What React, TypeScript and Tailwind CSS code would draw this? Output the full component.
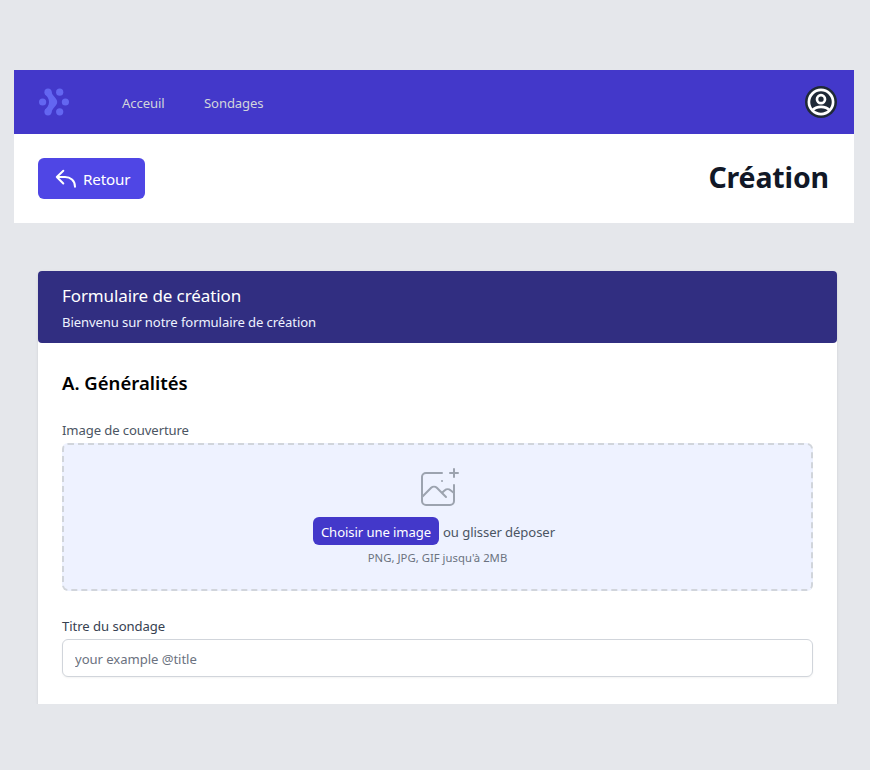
import React from "react";

function Logo() {
  return (
    <svg width="32" height="32" viewBox="0 0 32 32" fill="#6366f1" className="shrink-0">
      <circle cx="4.6" cy="16" r="3.6" />
      <circle cx="10" cy="6.2" r="3.6" />
      <circle cx="21.7" cy="6.2" r="3.6" />
      <circle cx="27.4" cy="16" r="3.6" />
      <circle cx="21.7" cy="25.8" r="3.6" />
      <circle cx="10" cy="25.8" r="3.6" />
      <path d="M13.4 5.2C13.7 9.4 19.2 12 19.2 16s-5.5 6.6-5.8 10.8L7 23.8c2.3-2.2 4-4.6 4-7.8S9.3 10.4 7 8.2Z" />
    </svg>
  );
}

function Account() {
  return (
    <svg width="32" height="32" viewBox="0 0 32 32" fill="none" stroke="#fff" strokeWidth="2.7" className="shrink-0">
      <circle cx="16" cy="16" r="16" fill="#1f2937" stroke="none" />
      <circle cx="16" cy="16" r="12.1" />
      <circle cx="16" cy="13.2" r="4" />
      <path d="M7.3 24.3C9.5 21.8 12.6 20.8 16 20.8s6.5 1 8.7 3.5" />
    </svg>
  );
}

export default function App() {
  return (
    <div className="h-[770px] w-[870px] overflow-hidden bg-[#e5e7eb] pt-[70px] font-['Noto_Sans',sans-serif]">
      <header className="ml-[14px] w-[840px]">
        <nav className="flex h-16 items-center bg-[#4338ca] pr-[17px] pl-6 text-[13.1px] tracking-[-0.1px] text-[#d1d5db]">
          <Logo />
          <span className="ml-[52px] w-[82px] pt-[3px]">Acceuil</span>
          <span className="pt-[3px]">Sondages</span>
          <span className="ml-auto">
            <Account />
          </span>
        </nav>
        <div className="flex h-[89px] items-start justify-between bg-white pt-6 pr-[25px] pl-6">
          <button className="flex h-[41px] w-[107px] items-center rounded-md bg-[#4f46e5] pl-4 text-[15.2px] tracking-[-0.15px] text-white">
            <svg width="24" height="24" viewBox="0 0 24 24" fill="none" stroke="currentColor" strokeWidth="2" strokeLinecap="round" strokeLinejoin="round">
              <path d="M9.3 3.7 2.8 10l6.5 6.5M2.8 10h8.2c5.300 0 10 3.200 10 9.700" />
            </svg>
            <span className="ml-[5px] pt-[2px]">Retour</span>
          </button>
          <h1 className="-mt-px text-[28.5px] leading-[40px] font-bold tracking-[-0.15px] text-[#111827]">Création</h1>
        </div>
      </header>

      <main className="mt-12 ml-[38px] h-[433px] w-[799px] rounded-t bg-white shadow-[0_1px_3px_rgba(0,0,0,0.1)] [clip-path:inset(-4px_-4px_0_-4px)]">
        <div className="h-[72px] rounded bg-[#312e81] px-6 pt-[11px] text-white">
          <h2 className="text-[17px] leading-7 tracking-[-0.1px]">Formulaire de création</h2>
          <p className="mt-[2px] text-[13.1px] leading-5 tracking-[-0.1px] text-[#eef2ff]">Bienvenu sur notre formulaire de création</p>
        </div>
        <div className="px-6">
          <h3 className="pt-[26px] text-[18.5px] leading-7 font-semibold text-black">A. Généralités</h3>
          <p className="mt-[23px] text-[13.1px] leading-5 tracking-[-0.1px] text-[#4b5563]">Image de couverture</p>
          <div className="mt-[3px] flex h-[148px] flex-col items-center rounded-md border-2 border-dashed border-[#d1d5db] bg-[#eef2ff] pt-[18px]">
            <svg width="48" height="48" viewBox="0 0 48 48" fill="none" stroke="#9ca3af" strokeWidth="2" strokeLinecap="round" strokeLinejoin="round">
              <path d="M28 10H12a4 4 0 0 0-4 4v24a4 4 0 0 0 4 4h24a4 4 0 0 0 4-4V22M8 34l9.172-9.172a4 4 0 0 1 5.656 0L28 30l4 4M28 30l1.172-1.172a6 6 0 0 1 1.656-1.5a4 4 0 0 1 5.656 0L40 30M28 18h.02M40 6v8M36 10h8" />
            </svg>
            <div className="mt-[6px] flex items-center text-[13.1px] tracking-[-0.08px] text-[#4b5563]">
              <span className="flex h-7 w-[126px] items-center justify-center rounded-md bg-[#4338ca] pt-[3px] text-white">Choisir une image</span>
              <span className="w-[123px] pt-[3px] pl-1 whitespace-nowrap">ou glisser déposer</span>
            </div>
            <p className="mt-[5px] text-[11.3px] leading-4 tracking-[0.02px] text-[#6b7280]">PNG, JPG, GIF jusqu'à 2MB</p>
          </div>
          <label className="mt-[25px] block text-[13.1px] leading-5 tracking-[-0.05px] text-[#374151]">Titre du sondage</label>
          <input
            className="mt-[3px] block h-[38px] w-full rounded-md border border-[#d1d5db] bg-white px-3 pt-[2px] text-[13.1px] tracking-[-0.05px] shadow-[0_1px_2px_rgba(0,0,0,0.05)] placeholder:text-[#6b7280]"
            placeholder="your example @title"
          />
        </div>
      </main>
    </div>
  );
}
